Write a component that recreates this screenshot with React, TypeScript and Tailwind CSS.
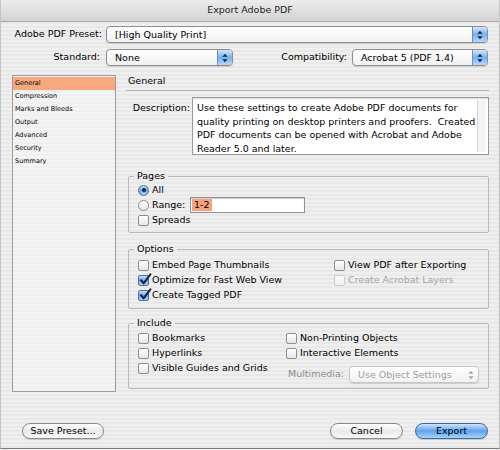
import React from 'react'

const FONT = "font-['DejaVu_Sans','Liberation_Sans',sans-serif]"

// little up/down triangles of an aqua popup
function Arrows({ disabled }: { disabled?: boolean }) {
  const c = disabled ? '#a8a8a8' : '#14233d'
  return (
    <svg width="6" height="10" viewBox="0 0 6 10">
      <path d="M3 0.8 L5.6 3.8 H0.4 Z" fill={c} />
      <path d="M3 9.2 L5.6 6.2 H0.4 Z" fill={c} />
    </svg>
  )
}

function Popup({ value, className = '', disabled }: { value: string; className?: string; disabled?: boolean }) {
  return (
    <div
      className={`flex h-[17px] items-stretch overflow-hidden rounded-[4px] border bg-linear-to-b from-white to-[#f1f1f1] shadow-[0_1px_1px_rgba(0,0,0,0.12)] ${
        disabled ? 'border-[#c6c6c6]' : 'border-[#8d8d8d]'
      } ${className}`}
    >
      <span className={`flex-1 truncate pl-[8px] leading-[15px] ${disabled ? 'pl-[7px] text-[#a0a0a0]' : 'text-black'}`}>{value}</span>
      {disabled ? (
        <span className="flex w-[15px] items-center justify-center">
          <Arrows disabled />
        </span>
      ) : (
        <span className="flex w-[15px] items-center justify-center border-l border-[#6f8fbd] bg-linear-to-b from-[#d3e6fb] via-[#78b0ef] to-[#b5d8fb]">
          <Arrows />
        </span>
      )}
    </div>
  )
}

function Box({ checked, disabled }: { checked?: boolean; disabled?: boolean }) {
  return (
    <span
      className={`relative inline-block h-[11px] w-[11px] shrink-0 rounded-[2px] border ${
        checked
          ? 'border-[#4f6f9c] bg-linear-to-b from-[#c6e0fa] via-[#6aa6ea] to-[#a9d2fa]'
          : disabled
          ? 'border-[#cbcbcb] bg-linear-to-b from-[#fbfbfb] to-[#eeeeee]'
          : 'border-[#8e8e8e] bg-linear-to-b from-white to-[#e6e6e6]'
      }`}
    >
      {checked && (
        <svg className="absolute left-[0px] top-[-3px]" width="13" height="13" viewBox="0 0 13 13">
          <path d="M2 7.2 L4.6 10.4 L11.4 1.4" fill="none" stroke="#15233c" strokeWidth="2" strokeLinecap="round" strokeLinejoin="round" />
        </svg>
      )}
    </span>
  )
}

function Check({ label, checked, disabled }: { label: string; checked?: boolean; disabled?: boolean }) {
  return (
    <div className="flex h-[15px] items-center">
      <Box checked={checked} disabled={disabled} />
      <span className={`ml-[3px] whitespace-nowrap ${disabled ? 'text-[#a6a6a6]' : 'text-black'}`}>{label}</span>
    </div>
  )
}

function Radio({ selected }: { selected?: boolean }) {
  return (
    <span
      className={`flex h-[11px] w-[11px] shrink-0 items-center justify-center rounded-full border ${
        selected
          ? 'border-[#4f6f9c] bg-linear-to-b from-[#c6e0fa] via-[#6aa6ea] to-[#a9d2fa]'
          : 'border-[#8e8e8e] bg-linear-to-b from-white to-[#e6e6e6]'
      }`}
    >
      {selected && <span className="h-[4px] w-[4px] rounded-full bg-[#14233d]" />}
    </span>
  )
}

function Group({ title, children, className = '' }: { title: string; children: React.ReactNode; className?: string }) {
  return (
    <fieldset className={`ml-[2px] w-[361px] rounded-[2px] border border-[#b9b9b9] ${className}`}>
      <legend className="ml-[5px] px-[3px] leading-[12px]">{title}</legend>
      {children}
    </fieldset>
  )
}

const sections = ['General', 'Compression', 'Marks and Bleeds', 'Output', 'Advanced', 'Security', 'Summary']

function Button({ label, primary, className = '' }: { label: string; primary?: boolean; className?: string }) {
  return (
    <button
      className={`h-[16px] rounded-full border text-center leading-[14px] shadow-[0_1px_1px_rgba(0,0,0,0.15)] ${
        primary
          ? 'border-[#3d6aa3] bg-linear-to-b from-[#cfe5fb] via-[#5ea2ec] to-[#a6d4fb] text-black'
          : 'border-[#8a8a8a] bg-linear-to-b from-white via-[#e9e9e9] to-[#fafafa] text-black'
      } ${className}`}
    >
      {label}
    </button>
  )
}

export default function App() {
  return (
    <div
      className={`${FONT} h-[450px] w-[500px] overflow-hidden text-[9.5px] text-black bg-[repeating-linear-gradient(to_bottom,#efefef_0px,#efefef_2px,#e8e8e8_2px,#e8e8e8_4px)]`}
    >
      <div className="flex h-[449px] flex-col border-x border-b border-x-[#c4c4c4] border-b-[#7a7a7a]">
        {/* title bar */}
        <div className="flex h-[22px] shrink-0 items-center justify-center border-b border-[#a9a9a9] bg-linear-to-b from-[#ececec] to-[#d3d3d3]">
          <span className="text-[#1e1e1e]">Export Adobe PDF</span>
        </div>

        {/* preset row */}
        <div className="mt-[4px] flex items-center">
          <span className="w-[101px] text-right">Adobe PDF Preset:</span>
          <Popup value="[High Quality Print]" className="ml-[4px] mr-[11px] flex-1" />
        </div>

        {/* standard / compatibility */}
        <div className="mt-[6px] flex items-center">
          <span className="w-[99px] text-right">Standard:</span>
          <Popup value="None" className="ml-[6px] w-[127px]" />
          <span className="flex-1 text-right">Compatibility:</span>
          <Popup value="Acrobat 5 (PDF 1.4)" className="ml-[5px] mr-[11px] w-[136px]" />
        </div>

        <div className="mt-[9px] flex">
          {/* section list */}
          <div className="ml-[11px] h-[317px] w-[104px] border border-[#9c9c9c] bg-white/30 pt-[1px] text-[6.5px]">
            {sections.map((s, i) => (
              <div key={s} className={`h-[13px] pl-[2px] leading-[13px] ${i === 0 ? 'bg-[#f8a87e]' : ''}`}>
                {s}
              </div>
            ))}
          </div>

          {/* general panel */}
          <div className="ml-[10px] flex w-[363px] flex-col">
            <div className="h-[16px] border-b border-[#b3b3b3] pl-[2px] leading-[12px]">General</div>

            <div className="mt-[6px] flex">
              <span className="w-[64px] pt-[4px] text-right">Description:</span>
              <div className="ml-[2px] flex h-[58px] w-[297px] border border-[#9a9a9a] bg-white shadow-[inset_0_1px_1px_rgba(0,0,0,0.15)]">
                <div className="flex-1 whitespace-pre pl-[4px] pt-[3px] leading-[13.7px]">
                  {'Use these settings to create Adobe PDF documents for\nquality printing on desktop printers and proofers.  Created\nPDF documents can be opened with Acrobat and Adobe\nReader 5.0 and later.'}
                </div>
                <div className="my-[2px] mr-[2px] w-[9px] border-l border-[#d6d6d6] bg-[#f4f4f4]" />
              </div>
            </div>

            <Group title="Pages" className="mt-[15px]">
              <div className="pb-[4px] pl-[9px] pt-[1px]">
                <div className="flex h-[14px] items-center">
                  <Radio selected />
                  <span className="ml-[3px]">All</span>
                </div>
                <div className="flex h-[16px] items-center">
                  <Radio />
                  <span className="ml-[3px] w-[38px]">Range:</span>
                  <div className="flex h-[16px] w-[115px] items-center border border-[#8f8f8f] bg-white pl-[1px] shadow-[inset_0_1px_1px_rgba(0,0,0,0.2)]">
                    <span className="bg-[#f7a27c] px-[2px] leading-[12px]">1-2</span>
                  </div>
                </div>
                <div className="flex h-[15px] items-center">
                  <Check label="Spreads" />
                </div>
              </div>
            </Group>

            <Group title="Options" className="mt-[10px]">
              <div className="flex pb-[5px] pl-[9px] pt-[3px]">
                <div className="w-[196px]">
                  <Check label="Embed Page Thumbnails" />
                  <Check label="Optimize for Fast Web View" checked />
                  <Check label="Create Tagged PDF" checked />
                </div>
                <div>
                  <Check label="View PDF after Exporting" />
                  <Check label="Create Acrobat Layers" disabled />
                </div>
              </div>
            </Group>

            <Group title="Include" className="mt-[8px]">
              <div className="flex pb-[5px] pl-[9px] pt-[2px]">
                <div className="w-[148px]">
                  <Check label="Bookmarks" />
                  <Check label="Hyperlinks" />
                  <Check label="Visible Guides and Grids" />
                </div>
                <div>
                  <Check label="Non-Printing Objects" />
                  <Check label="Interactive Elements" />
                  <div className="mt-[5px] flex items-center">
                    <span className="ml-[2px] text-[#8c8c8c]">Multimedia:</span>
                    <Popup value="Use Object Settings" disabled className="ml-[5px] h-[16px] w-[130px]" />
                  </div>
                </div>
              </div>
            </Group>
          </div>
        </div>

        {/* bottom buttons */}
        <div className="mt-[31px] flex items-center">
          <Button label="Save Preset..." className="ml-[21px] w-[82px]" />
          <div className="flex-1" />
          <Button label="Cancel" className="w-[73px]" />
          <Button label="Export" primary className="ml-[12px] mr-[11px] w-[73px]" />
        </div>
      </div>
    </div>
  )
}
